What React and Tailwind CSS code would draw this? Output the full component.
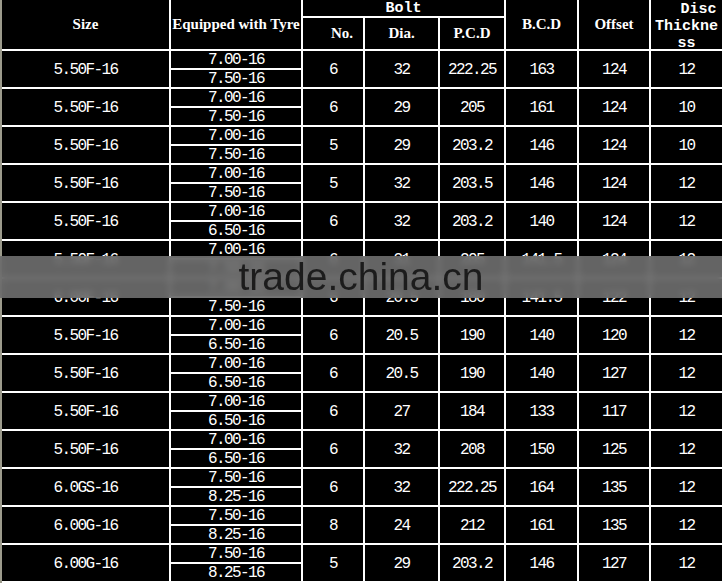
import React from 'react';

const rows = [
    ['5.50F-16', '7.00-16', '7.50-16', '6', '32', '222.25', '163', '124', '12'],
    ['5.50F-16', '7.00-16', '7.50-16', '6', '29', '205', '161', '124', '10'],
    ['5.50F-16', '7.00-16', '7.50-16', '5', '29', '203.2', '146', '124', '10'],
    ['5.50F-16', '7.00-16', '7.50-16', '5', '32', '203.5', '146', '124', '12'],
    ['5.50F-16', '7.00-16', '6.50-16', '6', '32', '203.2', '140', '124', '12'],
    ['5.50F-16', '7.00-16', '7.50-16', '6', '31', '205', '141.5', '124', '12'],
    ['6.00F-16', '7.00-16', '7.50-16', '6', '20.5', '180', '141.5', '122', '12'],
    ['5.50F-16', '7.00-16', '6.50-16', '6', '20.5', '190', '140', '120', '12'],
    ['5.50F-16', '7.00-16', '6.50-16', '6', '20.5', '190', '140', '127', '12'],
    ['5.50F-16', '7.00-16', '6.50-16', '6', '27', '184', '133', '117', '12'],
    ['5.50F-16', '7.00-16', '6.50-16', '6', '32', '208', '150', '125', '12'],
    ['6.0GS-16', '7.50-16', '8.25-16', '6', '32', '222.25', '164', '135', '12'],
    ['6.00G-16', '7.50-16', '8.25-16', '8', '24', '212', '161', '135', '12'],
    ['6.00G-16', '7.50-16', '8.25-16', '5', '29', '203.2', '146', '127', '12'],
];

const cell = 'bg-black flex items-center justify-center text-white';
const head = `${cell} font-['Liberation_Serif',serif] font-bold text-[15px]`;
const mono = `${cell} font-['Liberation_Mono',monospace] text-[16px] tracking-[-1.6px] leading-none`;

const App = () => {
    return (
        <div className="relative w-[722px] h-[583px] bg-black overflow-hidden">
            <div className="grid grid-cols-[167px_130px_60px_73px_64px_71px_70px_71px] grid-rows-[16px_31px_repeat(28,17px)] gap-[2px] bg-white border-l-2 border-[#9c9b8c] pb-[2px]">
                <div className={`${head} row-span-2`}>Size</div>
                <div className={`${head} row-span-2`}>Equipped with Tyre</div>
                <div className={`${cell} col-span-3 pt-[1px] font-['Liberation_Mono',monospace] font-bold text-[15px] leading-none`}>Bolt</div>
                <div className={`${head} row-span-2`}>B.C.D</div>
                <div className={`${head} row-span-2`}>Offset</div>
                <div className={`${cell} row-span-2 flex-col pt-[3px] font-['Liberation_Mono',monospace] font-bold text-[15px] leading-[17px] whitespace-nowrap`}>
                    <span className="pl-[24px]">Disc</span>
                    <span>Thickne</span>
                    <span>ss</span>
                </div>
                <div className={`${head} pl-[18px]`}>No.</div>
                <div className={head}>Dia.</div>
                <div className={head}>P.C.D</div>

                {rows.map((r, i) => (
                    <React.Fragment key={i}>
                        <div className={`${mono} row-span-2 pt-[2px]`}>{r[0]}</div>
                        <div className={mono}>{r[1]}</div>
                        <div className={`${mono} row-span-2 pt-[2px]`}>{r[3]}</div>
                        <div className={`${mono} row-span-2 pt-[2px]`}>{r[4]}</div>
                        <div className={`${mono} row-span-2 pt-[2px]`}>{r[5]}</div>
                        <div className={`${mono} row-span-2 pt-[2px]`}>{r[6]}</div>
                        <div className={`${mono} row-span-2 pt-[2px]`}>{r[7]}</div>
                        <div className={`${mono} row-span-2 pt-[2px]`}>{r[8]}</div>
                        <div className={mono}>{r[2]}</div>
                    </React.Fragment>
                ))}
            </div>

            {/* watermark band */}
            <div className="absolute left-0 top-[256px] w-[722px] h-[42px] bg-[#6f6f6f]/90 backdrop-blur-[3px] flex items-center justify-center">
                <span className="font-['Liberation_Sans',Arial,sans-serif] text-[39px] leading-[42px] text-[#1c1c1c]">trade.china.cn</span>
            </div>
        </div>
    );
};

export default App;
